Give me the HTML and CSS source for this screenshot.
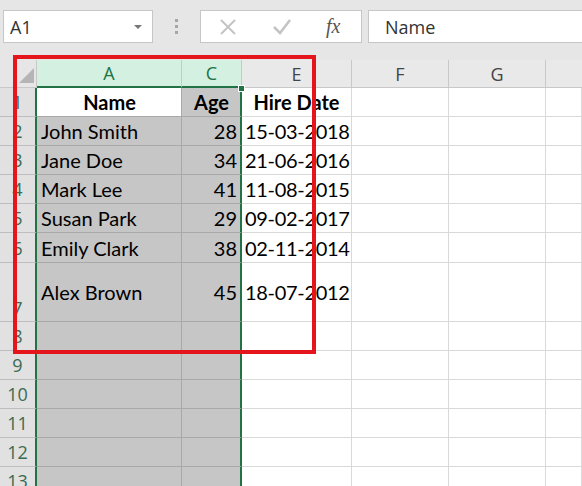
FILE: index.html
```html
<!DOCTYPE html>
<html>
<head>
<meta charset="utf-8">
<link rel="stylesheet" href="styles.css">
</head>
<body>
<div class="toolbar">
  <div class="namebox"><span class="ref">A1</span><span class="caret"></span></div>
  <div class="grip"><i></i><i></i><i></i></div>
  <div class="fbtns">
    <svg class="ico" width="20" height="20" viewBox="0 0 20 20"><path d="M3 3 L17 17 M17 3 L3 17" stroke="#c4c4c4" stroke-width="2" fill="none"/></svg>
    <svg class="ico" width="20" height="20" viewBox="0 0 20 20"><path d="M2 10 L8 16 L18 3" stroke="#c4c4c4" stroke-width="2.6" fill="none"/></svg>
    <span class="fx">fx</span>
  </div>
  <div class="formula">Name</div>
</div>
<div class="sheet">
  <div class="corner"><span class="tri"></span></div>
  <div class="ch sel">A</div>
  <div class="ch sel">C</div>
  <div class="ch">E</div>
  <div class="ch">F</div>
  <div class="ch">G</div>
  <div class="ch last"></div>

  <div class="rh">1</div>
  <div class="c a active b ctr">Name</div>
  <div class="c cc b ctr">Age</div>
  <div class="c e b ctr">Hire Date</div>
  <div class="c"></div><div class="c"></div><div class="c"></div>

  <div class="rh">2</div>
  <div class="c a">John Smith</div>
  <div class="c cc num">28</div>
  <div class="c e dt">15-03-2018</div>
  <div class="c"></div><div class="c"></div><div class="c"></div>

  <div class="rh">3</div>
  <div class="c a">Jane Doe</div>
  <div class="c cc num">34</div>
  <div class="c e dt">21-06-2016</div>
  <div class="c"></div><div class="c"></div><div class="c"></div>

  <div class="rh">4</div>
  <div class="c a">Mark Lee</div>
  <div class="c cc num">41</div>
  <div class="c e dt">11-08-2015</div>
  <div class="c"></div><div class="c"></div><div class="c"></div>

  <div class="rh">5</div>
  <div class="c a">Susan Park</div>
  <div class="c cc num">29</div>
  <div class="c e dt">09-02-2017</div>
  <div class="c"></div><div class="c"></div><div class="c"></div>

  <div class="rh">6</div>
  <div class="c a">Emily Clark</div>
  <div class="c cc num">38</div>
  <div class="c e dt">02-11-2014</div>
  <div class="c"></div><div class="c"></div><div class="c"></div>

  <div class="rh tall">7</div>
  <div class="c a">Alex Brown</div>
  <div class="c cc num">45</div>
  <div class="c e dt">18-07-2012</div>
  <div class="c"></div><div class="c"></div><div class="c"></div>

  <div class="rh">8</div>
  <div class="c a"></div><div class="c cc"></div><div class="c e"></div>
  <div class="c"></div><div class="c"></div><div class="c"></div>

  <div class="rh">9</div>
  <div class="c a"></div><div class="c cc"></div><div class="c e"></div>
  <div class="c"></div><div class="c"></div><div class="c"></div>

  <div class="rh">10</div>
  <div class="c a"></div><div class="c cc"></div><div class="c e"></div>
  <div class="c"></div><div class="c"></div><div class="c"></div>

  <div class="rh">11</div>
  <div class="c a"></div><div class="c cc"></div><div class="c e"></div>
  <div class="c"></div><div class="c"></div><div class="c"></div>

  <div class="rh">12</div>
  <div class="c a"></div><div class="c cc"></div><div class="c e"></div>
  <div class="c"></div><div class="c"></div><div class="c"></div>

  <div class="rh">13</div>
  <div class="c a"></div><div class="c cc"></div><div class="c e"></div>
  <div class="c"></div><div class="c"></div><div class="c"></div>

  <span class="handle"></span>
  <div class="mark"></div>
</div>
</body>
</html>
```

FILE: styles.css
```css
html, body {
  margin: 0;
  padding: 0;
  background: #ffffff;
  overflow: hidden;
}
body {
  width: 582px;
  height: 486px;
  font-family: "Lato", "Open Sans", sans-serif;
}
.toolbar {
  height: 60px;
  background: #e6e6e6;
  display: flex;
  align-items: flex-start;
  padding-top: 10px;
  box-sizing: border-box;
  font-family: "Open Sans", "Noto Sans", sans-serif;
}
.namebox {
  margin-left: 3px;
  width: 150px;
  height: 33px;
  box-sizing: border-box;
  background: #fff;
  border: 1px solid #c6c6c6;
  display: flex;
  align-items: center;
  justify-content: space-between;
  padding: 0 10px 0 6px;
}
.ref {
  font-size: 18px;
  color: #333;
}
.caret {
  width: 0;
  height: 0;
  border-left: 4px solid transparent;
  border-right: 4px solid transparent;
  border-top: 4px solid #777;
}
.grip {
  width: 47px;
  height: 33px;
  display: flex;
  flex-direction: column;
  align-items: center;
  justify-content: center;
  gap: 3px;
}
.grip i {
  display: block;
  width: 3px;
  height: 3px;
  background: #a6a6a6;
}
.fbtns {
  width: 162px;
  height: 33px;
  box-sizing: border-box;
  background: #fff;
  border: 1px solid #c6c6c6;
  display: flex;
  align-items: center;
  padding-left: 17px;
  gap: 34px;
}
.fx {
  font-family: "Liberation Serif", "DejaVu Serif", serif;
  font-style: italic;
  font-size: 20px;
  color: #555;
}
.formula {
  margin-left: 6px;
  flex: 1;
  height: 33px;
  box-sizing: border-box;
  background: #fff;
  border: 1px solid #c6c6c6;
  border-right: none;
  display: flex;
  align-items: center;
  padding-left: 16px;
  font-size: 18px;
  color: #333;
}
.sheet {
  position: relative;
  display: grid;
  grid-template-columns: 37px 145px 60px 110px 97px 97px 1fr;
  grid-template-rows: 28px 29px 29px 29px 29px 29px 30px 59px 29px 29px 29px 29px 29px 29px;
  background: #fff;
}
.sheet > div {
  box-sizing: border-box;
}
.corner {
  background: #e6e6e6;
  border-right: 1px solid #c8c8c8;
  border-bottom: 1px solid #c8c8c8;
  position: relative;
}
.tri {
  position: absolute;
  right: 2px;
  bottom: 4px;
  width: 0;
  height: 0;
  border-left: 15px solid transparent;
  border-bottom: 15px solid #b5b5b5;
}
.ch {
  background: #e9e9e9;
  border-right: 1px solid #c8c8c8;
  border-bottom: 1px solid #c8c8c8;
  display: flex;
  align-items: center;
  justify-content: center;
  font-family: "Open Sans", "Noto Sans", sans-serif;
  font-size: 18px;
  color: #444;
}
.ch.sel {
  background: #d3f0e0;
  color: #217346;
  border-right-color: #b5d3c3;
  border-bottom: 2px solid #217346;
}
.ch.last {
  border-right: none;
}
.rh {
  background: #e1e1e1;
  border-right: 2px solid #217346;
  border-bottom: 1px solid #bdbdbd;
  display: flex;
  align-items: center;
  justify-content: center;
  font-family: "Open Sans", "Noto Sans", sans-serif;
  font-size: 18px;
  color: #3b6b52;
}
.rh.tall {
  align-items: flex-end;
  padding-bottom: 1px;
}
.c {
  border-right: 1px solid #d9d9d9;
  border-bottom: 1px solid #d9d9d9;
  display: flex;
  align-items: center;
  padding: 0 3px 0 4px;
  font-size: 20px;
  color: #000;
  white-space: nowrap;
  overflow: hidden;
}
.c.a {
  background: #c6c6c6;
  border-right-color: #a9a9a9;
  border-bottom-color: #a9a9a9;
}
.c.cc {
  background: #c6c6c6;
  border-right: 2px solid #217346;
  border-bottom-color: #a9a9a9;
}
.c.active {
  background: #fff;
}
.c.b {
  font-weight: 700;
}
.c.ctr {
  justify-content: center;
}
.c.num {
  justify-content: flex-end;
}
.c.e {
  padding-left: 3px;
}
.c.dt {
  letter-spacing: -0.3px;
}
.handle {
  position: absolute;
  left: 238px;
  top: 25px;
  width: 5px;
  height: 5px;
  background: #217346;
  border: 1px solid #fff;
}
.mark {
  position: absolute;
  left: 13px;
  top: -5px;
  width: 303px;
  height: 299px;
  box-sizing: border-box;
  border: 4px solid #e5151c;
}
```
